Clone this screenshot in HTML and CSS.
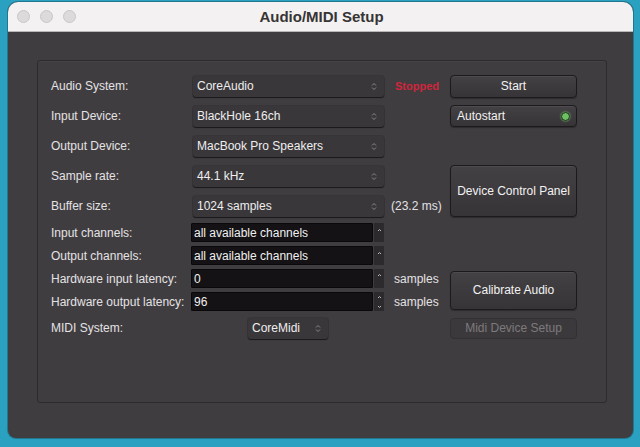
FILE: index.html
```html
<!DOCTYPE html>
<html>
<head>
<meta charset="utf-8">
<link rel="stylesheet" href="styles.css">
</head>
<body>
<div class="window">
  <div class="titlebar">
    <div class="lights"><span class="light"></span><span class="light"></span><span class="light"></span></div>
    <div class="title">Audio/MIDI Setup</div>
  </div>
  <div class="body">
    <div class="panel">
      <div class="grid">
        <div class="label r1">Audio System:</div>
        <div class="ctl r1"><div class="popup"><span>CoreAudio</span><svg class="arr" width="6" height="9" viewBox="0 0 6 9"><path d="M1 3.5L3 1.5L5 3.5M1 5.5L3 7.5L5 5.5" fill="none" stroke="#8a878a" stroke-width="1"/></svg></div></div>
        <div class="extra r1 stopped">Stopped</div>
        <div class="btncol r1"><div class="btn start">Start</div></div>

        <div class="label r2">Input Device:</div>
        <div class="ctl r2"><div class="popup"><span>BlackHole 16ch</span><svg class="arr" width="6" height="9" viewBox="0 0 6 9"><path d="M1 3.5L3 1.5L5 3.5M1 5.5L3 7.5L5 5.5" fill="none" stroke="#8a878a" stroke-width="1"/></svg></div></div>
        <div class="btncol r2"><div class="btn toggle"><span>Autostart</span><span class="led"></span></div></div>

        <div class="label r3">Output Device:</div>
        <div class="ctl r3"><div class="popup"><span>MacBook Pro Speakers</span><svg class="arr" width="6" height="9" viewBox="0 0 6 9"><path d="M1 3.5L3 1.5L5 3.5M1 5.5L3 7.5L5 5.5" fill="none" stroke="#8a878a" stroke-width="1"/></svg></div></div>

        <div class="label r4">Sample rate:</div>
        <div class="ctl r4"><div class="popup"><span>44.1 kHz</span><svg class="arr" width="6" height="9" viewBox="0 0 6 9"><path d="M1 3.5L3 1.5L5 3.5M1 5.5L3 7.5L5 5.5" fill="none" stroke="#8a878a" stroke-width="1"/></svg></div></div>
        <div class="btncol r45"><div class="btn big">Device Control Panel</div></div>

        <div class="label r5">Buffer size:</div>
        <div class="ctl r5"><div class="popup"><span>1024 samples</span><svg class="arr" width="6" height="9" viewBox="0 0 6 9"><path d="M1 3.5L3 1.5L5 3.5M1 5.5L3 7.5L5 5.5" fill="none" stroke="#8a878a" stroke-width="1"/></svg></div></div>
        <div class="extra r5 note">(23.2 ms)</div>

        <div class="label r6">Input channels:</div>
        <div class="ctl r6"><div class="field"><span class="val">all available channels</span><span class="step"><svg width="5" height="10" viewBox="0 0 5 10"><path d="M1 3L2.5 1.5L4 3" fill="none" stroke="#bbb" stroke-width="1"/></svg></span></div></div>

        <div class="label r7">Output channels:</div>
        <div class="ctl r7"><div class="field"><span class="val">all available channels</span><span class="step"><svg width="5" height="10" viewBox="0 0 5 10"><path d="M1 3L2.5 1.5L4 3" fill="none" stroke="#bbb" stroke-width="1"/></svg></span></div></div>

        <div class="label r8">Hardware input latency:</div>
        <div class="ctl r8"><div class="field"><span class="val">0</span><span class="step"><svg width="5" height="12" viewBox="0 0 5 12"><path d="M1 3L2.5 1.5L4 3" fill="none" stroke="#bbb" stroke-width="1"/></svg></span></div></div>
        <div class="extra r8 note2">samples</div>

        <div class="label r9">Hardware output latency:</div>
        <div class="ctl r9"><div class="field"><span class="val">96</span><span class="step"><svg width="5" height="14" viewBox="0 0 5 14"><path d="M1 3L2.5 1.5L4 3M1 11L2.5 12.5L4 11" fill="none" stroke="#bbb" stroke-width="1"/></svg></span></div></div>
        <div class="extra r9 note2">samples</div>
        <div class="btncol r89"><div class="btn cal">Calibrate Audio</div></div>

        <div class="label r10">MIDI System:</div>
        <div class="ctl r10"><div class="popup midi"><span>CoreMidi</span><svg class="arr" width="6" height="9" viewBox="0 0 6 9"><path d="M1 3.5L3 1.5L5 3.5M1 5.5L3 7.5L5 5.5" fill="none" stroke="#8a878a" stroke-width="1"/></svg></div></div>
        <div class="btncol r10"><div class="btn disabled">Midi Device Setup</div></div>
      </div>
    </div>
  </div>
</div>
</body>
</html>
```
FILE: styles.css
```css
html, body {
  margin: 0;
  padding: 0;
}
body {
  background: #2aa1c1;
  width: 640px;
  height: 447px;
  overflow: hidden;
  font-family: "Liberation Sans", Arial, sans-serif;
  font-size: 12px;
  color: #e4e2e4;
}
.window {
  margin: 2px 0 0 8px;
  width: 625px;
  height: 436px;
  border-radius: 10px 10px 8px 8px;
  overflow: hidden;
  display: flex;
  flex-direction: column;
  background: #403d40;
  box-shadow: 0 0 0 1px rgba(20, 40, 50, 0.35);
}
.titlebar {
  height: 29px;
  flex: none;
  background: #f3f1f1;
  border-bottom: 1px solid #b9b7b7;
  display: flex;
  align-items: center;
  justify-content: center;
  position: relative;
}
.lights {
  position: absolute;
  left: 9px;
  top: 8px;
  display: flex;
  gap: 10px;
}
.light {
  width: 11px;
  height: 11px;
  border-radius: 50%;
  background: #dcdada;
  border: 1px solid #c8c6c6;
}
.title {
  font-weight: bold;
  font-size: 15px;
  color: #363434;
  padding-left: 2px;
}
.body {
  flex: 1;
  padding: 28px 26px 35px 29px;
  display: flex;
}
.panel {
  flex: 1;
  border: 1px solid #2d2a2d;
  border-radius: 3px;
  box-shadow: inset 0 1px 0 rgba(255,255,255,0.03);
  padding: 10px 0 0 13px;
}
.grid {
  display: grid;
  grid-template-columns: 140px 193px 66px 127px;
  grid-template-rows: 30px 30px 30px 30px 30px 23px 23px 23px 23px 30px;
}
.label, .ctl, .extra, .btncol {
  display: flex;
  align-items: center;
}
.label { grid-column: 1; white-space: nowrap; }
.ctl { grid-column: 2; }
.extra { grid-column: 3; white-space: nowrap; }
.btncol { grid-column: 4; }
.r1 { grid-row: 1; }
.r2 { grid-row: 2; }
.r3 { grid-row: 3; }
.r4 { grid-row: 4; }
.r5 { grid-row: 5; }
.r6 { grid-row: 6; }
.r7 { grid-row: 7; }
.r8 { grid-row: 8; }
.r9 { grid-row: 9; }
.r10 { grid-row: 10; }
.r45 { grid-row: 4 / 6; }
.r89 { grid-row: 8 / 10; }

.popup {
  margin-left: 2px;
  width: 191px;
  height: 21px;
  box-sizing: border-box;
  background: #3a373a;
  border-radius: 3px;
  box-shadow: 0 1px 1px rgba(0,0,0,0.55), 0 0 0 1px rgba(0,0,0,0.12);
  display: flex;
  align-items: center;
  justify-content: space-between;
  padding: 0 7px 0 4px;
  color: #eeeeee;
}
.popup .arr { flex: none; }
.popup.midi {
  margin-left: 57px;
  width: 80px;
}
.field {
  width: 193px;
  height: 19px;
  display: flex;
  align-items: stretch;
}
.field .val {
  flex: 1;
  background: #141214;
  border: 1px solid #0a090a;
  border-radius: 1px;
  display: flex;
  align-items: center;
  padding-left: 2px;
  color: #f0f0f0;
}
.field .step {
  width: 10px;
  display: flex;
  align-items: center;
  justify-content: center;
  background: #2c2a2c;
  margin-left: 1px;
}
.stopped {
  color: #d1253c;
  font-weight: bold;
  font-size: 11px;
  padding-left: 11px;
}
.note { padding-left: 7px; }
.note2 { padding-left: 10px; }

.btn {
  width: 127px;
  box-sizing: border-box;
  border: 1px solid #1c1a1c;
  border-radius: 4px;
  background: linear-gradient(#444144, #373437);
  box-shadow: inset 0 1px 0 rgba(255,255,255,0.06), 0 1px 1px rgba(0,0,0,0.3);
  display: flex;
  align-items: center;
  justify-content: center;
  color: #f2f2f2;
  font-size: 12px;
}
.btn.start { height: 23px; }
.btn.toggle {
  height: 22px;
  justify-content: space-between;
  padding: 0 6px 0 6px;
}
.led {
  width: 7px;
  height: 7px;
  border-radius: 50%;
  background: #6cbf63;
  border: 1px solid #1a2a18;
  box-shadow: 0 0 2px #88dd77;
}
.btn.big { height: 52px; }
.btn.cal { height: 39px; }
.btn.disabled {
  height: 21px;
  border-color: #333033;
  background: #3c393c;
  color: #7c797c;
  box-shadow: none;
}
```
